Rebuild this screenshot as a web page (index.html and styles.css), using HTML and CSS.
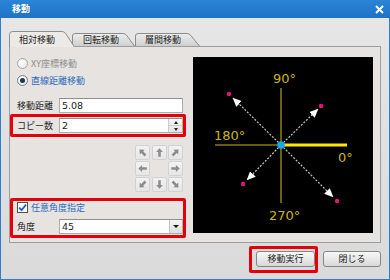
FILE: index.html
```html
<!DOCTYPE html>
<html lang="ja">
<head>
<meta charset="utf-8">
<title>移動</title>
<link rel="stylesheet" href="styles.css">
</head>
<body>
<div class="window">
  <div class="titlebar">
    <span class="title">移動</span>
    <svg class="close" width="9" height="9" viewBox="0 0 9 9"><path d="M1 1 L8 8 M8 1 L1 8" stroke="#fff" stroke-width="1.9"/></svg>
  </div>
  <div class="client">
    <div class="tabs">
      <div class="tab tab1 active">
        <svg class="tab-bg" width="66" height="16" viewBox="0 0 66 16"><path d="M0.5,16 V3.5 Q0.5,0.5 3.5,0.5 H53 Q55,0.5 56.5,2.3 L65.5,16" fill="#ece9e6" stroke="#8c8c8c"/></svg>
        <span class="tab-label">相対移動</span>
      </div>
      <div class="tab tab2">
        <svg class="tab-bg" width="63" height="13" viewBox="0 0 63 13"><defs><linearGradient id="tg" x1="0" y1="0" x2="0" y2="1"><stop offset="0" stop-color="#ededed"/><stop offset="1" stop-color="#cfcfcf"/></linearGradient></defs><path d="M0.5,13 V3 Q0.5,0.5 3,0.5 H51 Q53,0.5 54.5,2.2 L62.5,13" fill="url(#tg)" stroke="#8c8c8c"/></svg>
        <span class="tab-label">回転移動</span>
      </div>
      <div class="tab tab3">
        <svg class="tab-bg" width="65" height="13" viewBox="0 0 65 13"><path d="M0.5,13 V3 Q0.5,0.5 3,0.5 H52 Q54,0.5 55.5,2.2 L64.5,13" fill="url(#tg)" stroke="#8c8c8c"/></svg>
        <span class="tab-label">層間移動</span>
      </div>
    </div>
    <div class="panel">
      <div class="left">
        <div class="radio disabled"><span class="radio-mark"></span><span>XY座標移動</span></div>
        <div class="radio checked"><span class="radio-mark"></span><span>直線距離移動</span></div>
        <div class="field plain">
          <span class="field-label">移動距離</span>
          <span class="input"><span class="value">5.08</span></span>
        </div>
        <div class="field highlight">
          <span class="field-label">コピー数</span>
          <span class="input"><span class="value">2</span><span class="spinner"><span class="spin up"></span><span class="spin down"></span></span></span>
        </div>
        <div class="arrows">
          <span class="abtn"><svg class="arr r315" viewBox="0 0 13 13"><path d="M6.5 1.5 L10.5 6 H8 V11.5 H5 V6 H2.5 Z"/></svg></span>
          <span class="abtn"><svg class="arr" viewBox="0 0 13 13"><path d="M6.5 1.5 L10.5 6 H8 V11.5 H5 V6 H2.5 Z"/></svg></span>
          <span class="abtn"><svg class="arr r45" viewBox="0 0 13 13"><path d="M6.5 1.5 L10.5 6 H8 V11.5 H5 V6 H2.5 Z"/></svg></span>
          <span class="abtn"><svg class="arr r270" viewBox="0 0 13 13"><path d="M6.5 1.5 L10.5 6 H8 V11.5 H5 V6 H2.5 Z"/></svg></span>
          <span class="acell"></span>
          <span class="abtn"><svg class="arr r90" viewBox="0 0 13 13"><path d="M6.5 1.5 L10.5 6 H8 V11.5 H5 V6 H2.5 Z"/></svg></span>
          <span class="abtn"><svg class="arr r225" viewBox="0 0 13 13"><path d="M6.5 1.5 L10.5 6 H8 V11.5 H5 V6 H2.5 Z"/></svg></span>
          <span class="abtn"><svg class="arr r180" viewBox="0 0 13 13"><path d="M6.5 1.5 L10.5 6 H8 V11.5 H5 V6 H2.5 Z"/></svg></span>
          <span class="abtn"><svg class="arr r135" viewBox="0 0 13 13"><path d="M6.5 1.5 L10.5 6 H8 V11.5 H5 V6 H2.5 Z"/></svg></span>
        </div>
        <div class="group highlight">
          <div class="check"><span class="checkbox"><svg width="9" height="9" viewBox="0 0 9 9"><path d="M1.2 4.6 L3.6 7.2 L8 1.6" fill="none" stroke="#1d5fb3" stroke-width="1.8"/></svg></span><span>任意角度指定</span></div>
          <div class="field inner">
            <span class="field-label">角度</span>
            <span class="input"><span class="value">45</span><span class="drop"></span></span>
          </div>
        </div>
      </div>
      <div class="canvas">
        <svg width="180" height="176" viewBox="0 0 180 176">
          <defs>
            <marker id="ah" markerWidth="9" markerHeight="8" refX="8.5" refY="4" orient="auto" markerUnits="userSpaceOnUse">
              <path d="M0,0 L9,4 L0,8 Z" fill="#ffffff" stroke="none"/>
            </marker>
          </defs>
          <line x1="88" y1="31" x2="88" y2="146" stroke="#867b0e" stroke-width="1.6"/>
          <line x1="22" y1="88" x2="88" y2="88" stroke="#867b0e" stroke-width="1.6"/>
          <line x1="88" y1="88" x2="154" y2="88" stroke="#ffea00" stroke-width="3"/>
          <g stroke="#c4c4c4" stroke-width="1.2" stroke-dasharray="2 1.5" marker-end="url(#ah)">
            <line x1="88" y1="88" x2="40" y2="41"/>
            <line x1="88" y1="88" x2="125" y2="52"/>
            <line x1="88" y1="88" x2="54" y2="123"/>
            <line x1="88" y1="88" x2="140" y2="140"/>
          </g>
          <circle cx="88" cy="88" r="3.8" fill="#18a8ee"/>
          <g fill="#e8127c">
            <circle cx="36" cy="37" r="2.2"/>
            <circle cx="128" cy="49" r="2.2"/>
            <circle cx="50" cy="127" r="2.2"/>
            <circle cx="144" cy="144" r="2.2"/>
          </g>
          <g class="deg">
            <text x="80" y="26">90°</text>
            <text x="21" y="83">180°</text>
            <text x="145" y="105">0°</text>
            <text x="76" y="163">270°</text>
          </g>
        </svg>
      </div>
    </div>
    <div class="buttons">
      <div class="btn-hl"><button class="btn exec">移動実行</button></div>
      <button class="btn close-btn">閉じる</button>
    </div>
  </div>
</div>
</body>
</html>
```

FILE: styles.css
```css
html, body {
  margin: 0;
  padding: 0;
}
body {
  width: 390px;
  height: 280px;
  overflow: hidden;
  font-family: "Noto Sans CJK JP", "DejaVu Sans", sans-serif;
  font-size: 9px;
  color: #1e1e1e;
  background: #ffffff;
}
.window {
  width: 390px;
  height: 280px;
  box-sizing: border-box;
  border: 1px solid #2f7dcd;
  border-top: none;
  display: flex;
  flex-direction: column;
  background: linear-gradient(#e7e7e7, #dadada);
}
.titlebar {
  height: 18px;
  margin: 0 -1px;
  padding: 0 6px 0 12px;
  display: flex;
  align-items: center;
  justify-content: space-between;
  background: linear-gradient(#2c84d6, #1f72c6);
  color: #ffffff;
}
.title {
  font-size: 9px;
  font-weight: bold;
  line-height: 18px;
}
.client {
  flex: 1;
  padding: 13px 8px 0 8px;
  display: flex;
  flex-direction: column;
}
.tabs {
  display: flex;
  align-items: flex-end;
  height: 16px;
  margin-bottom: -1px;
  position: relative;
  z-index: 2;
}
.tab {
  position: relative;
  height: 13px;
  margin-bottom: 1px;
}
.tab-bg {
  position: absolute;
  left: 0;
  top: 0;
  display: block;
}
.tab-label {
  position: relative;
  display: block;
  line-height: 13px;
  white-space: nowrap;
}
.tab1 {
  width: 66px;
  height: 16px;
  margin-bottom: 0;
  z-index: 3;
}
.tab1 .tab-label {
  padding: 2px 0 0 10px;
}
.tab2 {
  width: 63px;
  margin-left: -3px;
  z-index: 2;
}
.tab2 .tab-label {
  padding-left: 11px;
}
.tab3 {
  width: 65px;
  z-index: 1;
}
.tab3 .tab-label {
  padding-left: 10px;
}
.panel {
  height: 197px;
  box-sizing: border-box;
  border: 1px solid #9d9d9d;
  background: #e6e3e0;
  display: flex;
  align-items: flex-start;
  position: relative;
  z-index: 1;
}
.left {
  width: 176px;
  display: flex;
  flex-direction: column;
  padding-top: 8px;
}
.radio, .check {
  display: flex;
  align-items: center;
  gap: 3px;
  height: 17px;
  padding-left: 7px;
  white-space: nowrap;
}
.radio-mark {
  width: 11px;
  height: 11px;
  box-sizing: border-box;
  border-radius: 50%;
  border: 1px solid #a8a8a8;
  background: radial-gradient(circle at 40% 35%, #ffffff, #e2e2e2);
  display: flex;
  align-items: center;
  justify-content: center;
}
.radio.disabled {
  color: #8e8e8e;
}
.radio.checked {
  color: #2d6cbd;
}
.radio.checked .radio-mark {
  border-color: #7d7d7d;
}
.radio.checked .radio-mark::after {
  content: "";
  width: 5px;
  height: 5px;
  border-radius: 50%;
  background: #1f3550;
}
.field {
  display: flex;
  align-items: center;
}
.field.plain {
  margin-top: 9px;
  padding: 0 3px 0 7px;
}
.field-label {
  width: 42px;
  flex: none;
  white-space: nowrap;
}
.highlight {
  border: 3px solid #e3000b;
  border-radius: 2px;
}
.field.highlight {
  margin-top: 1px;
  padding: 1px 0 1px 4px;
}
.input {
  flex: 1;
  height: 15px;
  box-sizing: border-box;
  border: 1px solid #adadad;
  border-top-color: #8e8e8e;
  background: #ffffff;
  display: flex;
  align-items: stretch;
  font-family: "DejaVu Sans", sans-serif;
  font-size: 9.5px;
  color: #222;
}
.value {
  padding-left: 2px;
  line-height: 13px;
}
.spinner {
  margin-left: auto;
  width: 13px;
  display: flex;
  flex-direction: column;
  border-left: 1px solid #c9c9c9;
  background: linear-gradient(#f7f7f7, #e4e4e4);
}
.spin {
  flex: 1;
  display: flex;
  align-items: center;
  justify-content: center;
}
.spin.up {
  border-bottom: 1px solid #cfcfcf;
}
.spin.up::after {
  content: "";
  border-left: 2.5px solid transparent;
  border-right: 2.5px solid transparent;
  border-bottom: 3px solid #222;
}
.spin.down::after {
  content: "";
  border-left: 2.5px solid transparent;
  border-right: 2.5px solid transparent;
  border-top: 3px solid #222;
}
.drop {
  margin-left: auto;
  width: 12px;
  border-left: 1px solid #c2c2c2;
  background: linear-gradient(#f6f6f6, #dedede);
  display: flex;
  align-items: center;
  justify-content: center;
}
.drop::after {
  content: "";
  border-left: 3px solid transparent;
  border-right: 3px solid transparent;
  border-top: 3px solid #1a1a1a;
}
.arrows {
  margin-top: 8px;
  align-self: flex-end;
  margin-right: 3px;
  display: grid;
  grid-template-columns: repeat(3, 15px);
  grid-template-rows: repeat(3, 15px);
  gap: 1px 1.5px;
}
.abtn {
  box-sizing: border-box;
  border: 1px solid #d2d2d2;
  border-radius: 2px;
  background: linear-gradient(#f2f2f2, #e6e6e6);
  display: flex;
  align-items: center;
  justify-content: center;
}
.arr {
  width: 11px;
  height: 11px;
  fill: #8c8c8c;
}
.r45 { transform: rotate(45deg); }
.r90 { transform: rotate(90deg); }
.r135 { transform: rotate(135deg); }
.r180 { transform: rotate(180deg); }
.r225 { transform: rotate(225deg); }
.r270 { transform: rotate(270deg); }
.r315 { transform: rotate(315deg); }
.group.highlight {
  margin-top: 6px;
  padding: 0 0 1px 0;
}
.check {
  height: 13px;
  padding-left: 4px;
  color: #2d6cbd;
}
.checkbox {
  width: 11px;
  height: 11px;
  box-sizing: border-box;
  border: 1px solid #4e4e4e;
  background: #ffffff;
  display: flex;
  align-items: center;
  justify-content: center;
}
.field.inner {
  margin-top: 5px;
  padding-left: 4px;
}
.canvas {
  margin: 10px 0 0 7px;
  width: 180px;
  height: 176px;
  background: #000000;
}
.canvas svg {
  display: block;
}
.deg text {
  font-family: "DejaVu Sans", sans-serif;
  font-size: 13px;
  fill: #cbb800;
}
.buttons {
  display: flex;
  justify-content: flex-end;
  align-items: flex-start;
  gap: 5px;
  margin-top: 3px;
}
.btn-hl {
  border: 3px solid #e3000b;
  border-radius: 2px;
  padding: 2px 0 3px 4px;
  display: flex;
}
.btn {
  height: 16px;
  box-sizing: border-box;
  border: 1px solid #858585;
  border-radius: 3px;
  background: linear-gradient(#f8f8f8, #e8e8e8 50%, #d8d8d8);
  font-family: "Noto Sans CJK JP", sans-serif;
  font-size: 9px;
  color: #1e1e1e;
  padding: 0;
  line-height: 14px;
  text-align: center;
}
.exec {
  width: 59px;
}
.close-btn {
  width: 58px;
  margin-top: 5px;
}
```
